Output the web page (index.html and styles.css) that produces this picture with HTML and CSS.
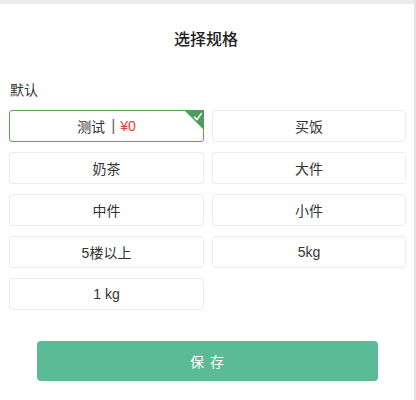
FILE: index.html
```html
<!DOCTYPE html>
<html lang="zh">
<head>
<meta charset="utf-8">
<link rel="stylesheet" href="styles.css">
</head>
<body>
<div class="topbar"></div>
<div class="sheet">
  <h1 class="title">选择规格</h1>
  <div class="group-label">默认</div>
  <div class="grid">
    <div class="opt selected">
      <span>测试</span><span class="sep">|</span><span class="price">¥0</span>
      <span class="corner">
        <svg width="20" height="20" viewBox="0 0 20 20"><polygon points="0,0 20,0 20,20" fill="#4f9d5e"/><path d="M10.5 7.2 L13 9.6 L17.2 3.6" fill="none" stroke="#fff" stroke-width="1.6" stroke-linecap="round" stroke-linejoin="round"/></svg>
      </span>
    </div>
    <div class="opt">买饭</div>
    <div class="opt">奶茶</div>
    <div class="opt">大件</div>
    <div class="opt">中件</div>
    <div class="opt">小件</div>
    <div class="opt">5楼以上</div>
    <div class="opt">5kg</div>
    <div class="opt">1 kg</div>
  </div>
  <div class="actions">
    <button class="save">保 存</button>
  </div>
</div>
</body>
</html>
```
FILE: styles.css
```css
* { box-sizing: border-box; }
html, body { margin: 0; padding: 0; background: #fff; }
body {
  width: 416px;
  height: 400px;
  overflow: hidden;
  font-family: "Liberation Sans", "Noto Sans CJK SC", sans-serif;
  color: #333;
  border-right: 2px solid #e2e2e2;
}
.topbar { height: 4px; background: #ebebeb; }
.sheet { padding: 0 9px 0 9px; }
.title {
  margin: 0;
  height: 72px;
  line-height: 72px;
  text-align: center;
  font-size: 16px;
  font-weight: 500;
  color: #222;
  padding-right: 2px;
}
.group-label {
  font-size: 14px;
  line-height: 20px;
  height: 34px;
  padding-left: 1px;
  padding-top: 4px;
  color: #333;
}
.grid {
  display: grid;
  grid-template-columns: 195px 194px;
  column-gap: 8px;
  row-gap: 10px;
}
.opt {
  position: relative;
  height: 32px;
  border: 1px solid #ececec;
  border-radius: 3px;
  display: flex;
  align-items: center;
  justify-content: center;
  font-size: 14px;
  color: #333;
}
.opt.selected { border: 1.5px solid #5aa64f; }
.sep { color: #666; margin: 0 5px 0 6px; font-size: 16px; }
.price { color: #ea3a2e; }
.corner {
  position: absolute;
  top: -1px;
  right: -1px;
  width: 20px;
  height: 20px;
  line-height: 0;
}
.actions { padding: 31px 0 0 28px; }
.save {
  width: 341px;
  height: 40px;
  border: none;
  border-radius: 4px;
  background: #5abb96;
  color: #fff;
  font-size: 14px;
  letter-spacing: 1px;
  font-family: "Liberation Sans", "Noto Sans CJK SC", sans-serif;
  padding: 0;
}
```
